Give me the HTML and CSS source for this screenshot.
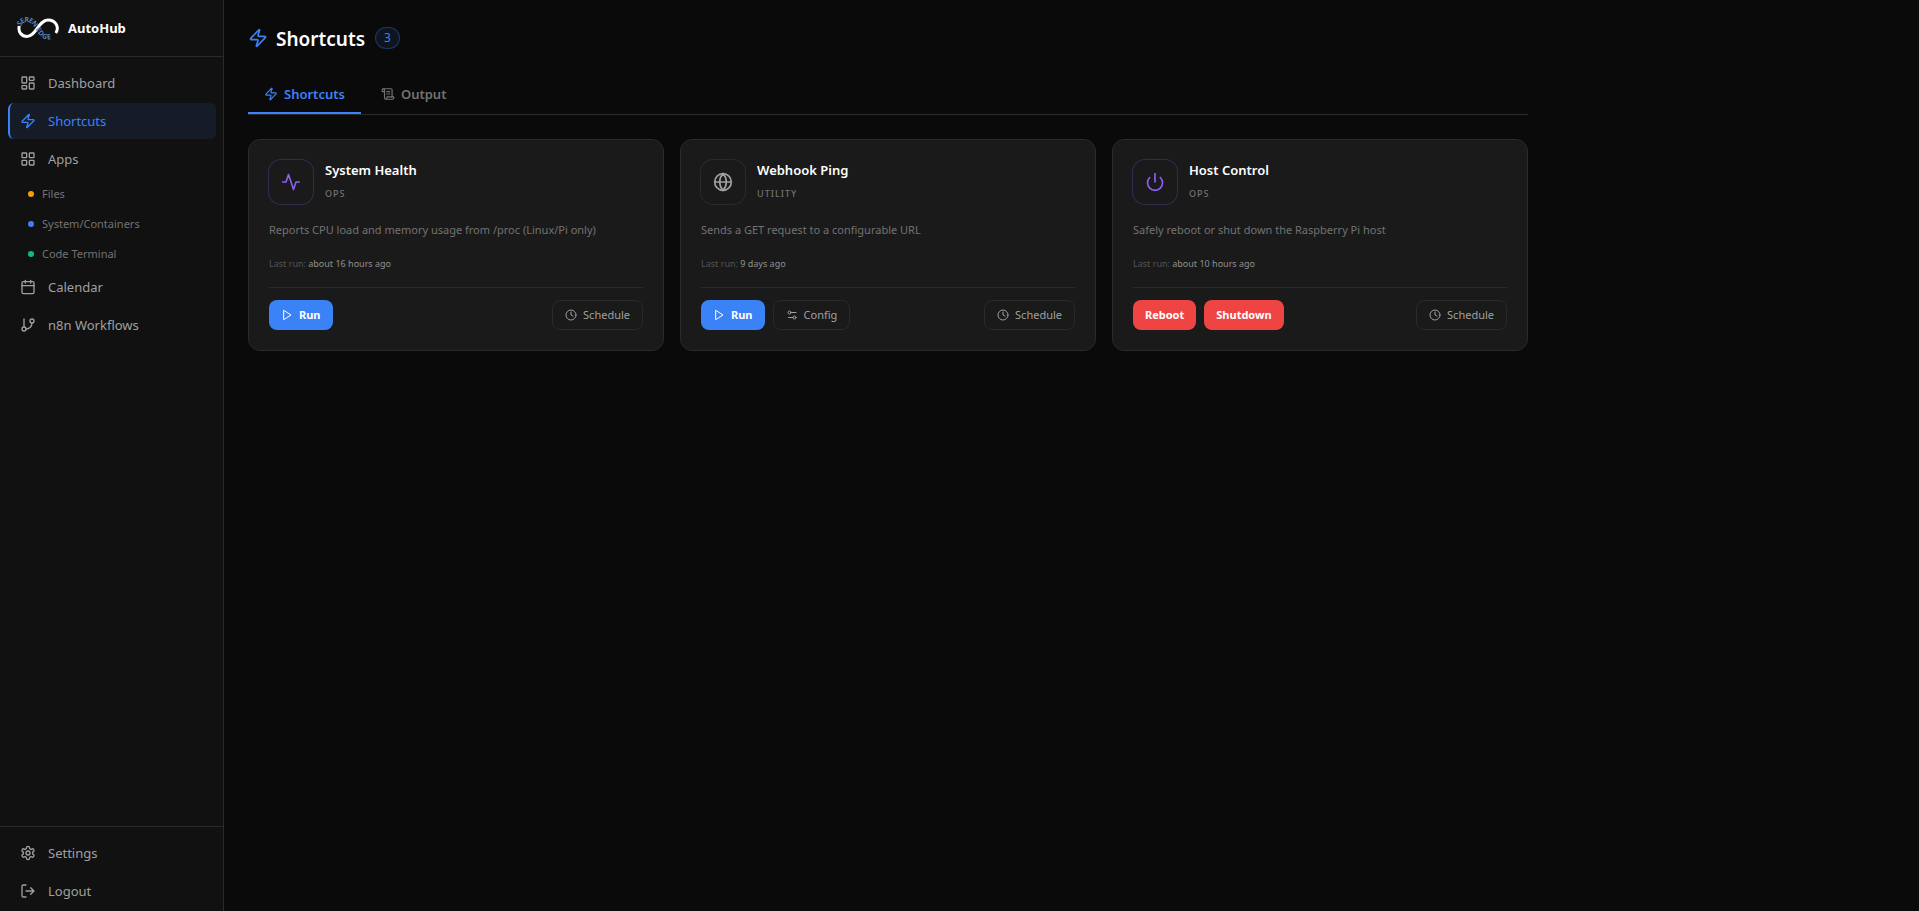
FILE: index.html
```html
<!DOCTYPE html>
<html lang="en">
<head>
  <meta charset="utf-8" />
  <meta name="viewport" content="width=device-width, initial-scale=1" />
  <title>AutoHub – Shortcuts</title>
  <link rel="stylesheet" href="styles.css">
</head>
<body>
  <!-- Shared icon symbols -->
  <svg class="sprite" aria-hidden="true">
    <symbol id="i-zap" viewBox="0 0 24 24"><path d="M4 14a1 1 0 0 1-.78-1.63l9.9-10.2a.5.5 0 0 1 .86.46l-1.92 6.02A1 1 0 0 0 13 10h7a1 1 0 0 1 .78 1.63l-9.9 10.2a.5.5 0 0 1-.86-.46l1.92-6.02A1 1 0 0 0 11 14z"/></symbol>
    <symbol id="i-dashboard" viewBox="0 0 24 24"><rect width="7" height="9" x="3" y="3" rx="1"/><rect width="7" height="5" x="14" y="3" rx="1"/><rect width="7" height="9" x="14" y="12" rx="1"/><rect width="7" height="5" x="3" y="16" rx="1"/></symbol>
    <symbol id="i-grid" viewBox="0 0 24 24"><rect width="7" height="7" x="3" y="3" rx="1"/><rect width="7" height="7" x="14" y="3" rx="1"/><rect width="7" height="7" x="14" y="14" rx="1"/><rect width="7" height="7" x="3" y="14" rx="1"/></symbol>
    <symbol id="i-calendar" viewBox="0 0 24 24"><path d="M8 2v4M16 2v4M3 10h18"/><rect width="18" height="18" x="3" y="4" rx="2"/></symbol>
    <symbol id="i-branch" viewBox="0 0 24 24"><path d="M6 3v12M18 9a9 9 0 0 1-9 9"/><circle cx="18" cy="6" r="3"/><circle cx="6" cy="18" r="3"/></symbol>
    <symbol id="i-settings" viewBox="0 0 24 24"><path d="M12.22 2h-.44a2 2 0 0 0-2 2v.18a2 2 0 0 1-1 1.73l-.43.25a2 2 0 0 1-2 0l-.15-.08a2 2 0 0 0-2.73.73l-.22.38a2 2 0 0 0 .73 2.73l.15.1a2 2 0 0 1 1 1.72v.51a2 2 0 0 1-1 1.74l-.15.09a2 2 0 0 0-.73 2.73l.22.38a2 2 0 0 0 2.73.73l.15-.08a2 2 0 0 1 2 0l.43.25a2 2 0 0 1 1 1.73V20a2 2 0 0 0 2 2h.44a2 2 0 0 0 2-2v-.18a2 2 0 0 1 1-1.73l.43-.25a2 2 0 0 1 2 0l.15.08a2 2 0 0 0 2.73-.73l.22-.39a2 2 0 0 0-.73-2.73l-.15-.08a2 2 0 0 1-1-1.74v-.5a2 2 0 0 1 1-1.74l.15-.09a2 2 0 0 0 .73-2.73l-.22-.38a2 2 0 0 0-2.73-.73l-.15.08a2 2 0 0 1-2 0l-.43-.25a2 2 0 0 1-1-1.73V4a2 2 0 0 0-2-2z"/><circle cx="12" cy="12" r="3"/></symbol>
    <symbol id="i-logout" viewBox="0 0 24 24"><path d="M9 21H5a2 2 0 0 1-2-2V5a2 2 0 0 1 2-2h4M16 17l5-5-5-5M21 12H9"/></symbol>
    <symbol id="i-scroll" viewBox="0 0 24 24"><path d="M15 12h-5M15 8h-5M19 17V5a2 2 0 0 0-2-2H4"/><path d="M8 21h12a2 2 0 0 0 2-2v-1a1 1 0 0 0-1-1H11a1 1 0 0 0-1 1v1a2 2 0 1 1-4 0V5a2 2 0 1 0-4 0v2a1 1 0 0 0 1 1h3"/></symbol>
    <symbol id="i-activity" viewBox="0 0 24 24"><path d="M22 12h-4l-3 9L9 3l-3 9H2"/></symbol>
    <symbol id="i-globe" viewBox="0 0 24 24"><circle cx="12" cy="12" r="10"/><path d="M12 2a14.5 14.5 0 0 0 0 20 14.5 14.5 0 0 0 0-20M2 12h20"/></symbol>
    <symbol id="i-power" viewBox="0 0 24 24"><path d="M12 2v10M18.4 6.6a9 9 0 1 1-12.77.04"/></symbol>
    <symbol id="i-play" viewBox="0 0 24 24"><path d="m6 3 14 9-14 9z"/></symbol>
    <symbol id="i-clock" viewBox="0 0 24 24"><circle cx="12" cy="12" r="10"/><path d="M12 6v6l4 2"/></symbol>
    <symbol id="i-sliders" viewBox="0 0 24 24"><path d="M20 7h-9M14 17H5"/><circle cx="17" cy="17" r="3"/><circle cx="7" cy="7" r="3"/></symbol>
  </svg>

  <div class="app">
    <aside class="sidebar">
      <div class="brand">
        <svg class="logo" viewBox="0 0 44 24" aria-hidden="true">
          <path class="logo-loop" d="M3.200 10C2 16 5.500 20.500 11 20.500C20 20.500 22.500 4 32 4C40 4 43.500 11.500 39.800 17"/>
          <path id="logo-line" class="logo-guide" d="M3 9.500C6 3 13 2.500 17.500 7C21.500 11 23 17.500 28.500 20.500C33 22.500 38 21 43 14"/>
          <text class="logo-text"><textPath href="#logo-line">SEREN EDGE</textPath></text>
        </svg>
        <span class="brand-name">AutoHub</span>
      </div>

      <nav class="nav">
        <a class="nav-item" href="#"><svg class="icon"><use href="#i-dashboard"/></svg>Dashboard</a>
        <a class="nav-item active" href="#"><svg class="icon"><use href="#i-zap"/></svg>Shortcuts</a>
        <a class="nav-item" href="#"><svg class="icon"><use href="#i-grid"/></svg>Apps</a>
        <a class="nav-sub" href="#"><span class="dot amber"></span>Files</a>
        <a class="nav-sub" href="#"><span class="dot blue"></span>System/Containers</a>
        <a class="nav-sub" href="#"><span class="dot green"></span>Code Terminal</a>
        <a class="nav-item" href="#"><svg class="icon"><use href="#i-calendar"/></svg>Calendar</a>
        <a class="nav-item" href="#"><svg class="icon"><use href="#i-branch"/></svg>n8n Workflows</a>
      </nav>

      <div class="nav-bottom">
        <a class="nav-item" href="#"><svg class="icon"><use href="#i-settings"/></svg>Settings</a>
        <button class="nav-item" type="button"><svg class="icon"><use href="#i-logout"/></svg>Logout</button>
      </div>
    </aside>

    <main class="main">
      <div class="content">
        <header class="page-head">
          <svg class="icon icon-lg"><use href="#i-zap"/></svg>
          <h1>Shortcuts</h1>
          <span class="count">3</span>
        </header>

        <div class="tabs" role="tablist">
          <button class="tab active" type="button" role="tab" aria-selected="true"><svg class="icon icon-sm"><use href="#i-zap"/></svg>Shortcuts</button>
          <button class="tab" type="button" role="tab" aria-selected="false"><svg class="icon icon-sm"><use href="#i-scroll"/></svg>Output</button>
        </div>

        <section class="cards">
          <article class="card">
            <div class="card-head">
              <div class="badge ops"><svg class="icon icon-lg"><use href="#i-activity"/></svg></div>
              <div>
                <h2>System Health</h2>
                <div class="category">OPS</div>
              </div>
            </div>
            <p class="desc">Reports CPU load and memory usage from /proc (Linux/Pi only)</p>
            <p class="last-run">Last run: <span>about 16 hours ago</span></p>
            <div class="actions">
              <button class="btn primary" type="button"><svg class="icon icon-xs"><use href="#i-play"/></svg>Run</button>
              <button class="btn ghost push" type="button"><svg class="icon icon-xs"><use href="#i-clock"/></svg>Schedule</button>
            </div>
          </article>

          <article class="card">
            <div class="card-head">
              <div class="badge"><svg class="icon icon-lg"><use href="#i-globe"/></svg></div>
              <div>
                <h2>Webhook Ping</h2>
                <div class="category">UTILITY</div>
              </div>
            </div>
            <p class="desc">Sends a GET request to a configurable URL</p>
            <p class="last-run">Last run: <span>9 days ago</span></p>
            <div class="actions">
              <button class="btn primary" type="button"><svg class="icon icon-xs"><use href="#i-play"/></svg>Run</button>
              <button class="btn ghost" type="button"><svg class="icon icon-xs"><use href="#i-sliders"/></svg>Config</button>
              <button class="btn ghost push" type="button"><svg class="icon icon-xs"><use href="#i-clock"/></svg>Schedule</button>
            </div>
          </article>

          <article class="card">
            <div class="card-head">
              <div class="badge ops"><svg class="icon icon-lg"><use href="#i-power"/></svg></div>
              <div>
                <h2>Host Control</h2>
                <div class="category">OPS</div>
              </div>
            </div>
            <p class="desc">Safely reboot or shut down the Raspberry Pi host</p>
            <p class="last-run">Last run: <span>about 10 hours ago</span></p>
            <div class="actions">
              <button class="btn danger" type="button">Reboot</button>
              <button class="btn danger" type="button">Shutdown</button>
              <button class="btn ghost push" type="button"><svg class="icon icon-xs"><use href="#i-clock"/></svg>Schedule</button>
            </div>
          </article>
        </section>
      </div>
    </main>
  </div>
</body>
</html>
```

FILE: styles.css
```css
:root {
  --bg: #0a0a0a;
  --panel: #111111;
  --card: #1a1a1a;
  --line: #2a2a2a;
  --text: #ffffff;
  --text-2: #a0a0a0;
  --text-3: #737373;
  --text-4: #555555;
  --blue: #3b82f6;
  --purple: #8b5cf6;
  --red: #ef4444;
}
* { box-sizing: border-box; }
body { margin: 0; background: var(--bg); color: var(--text); font-family: "Noto Sans", "Open Sans", sans-serif; font-size: 13px; line-height: 20px; }
a { color: inherit; text-decoration: none; }
button { font: inherit; color: inherit; background: none; border: 0; cursor: pointer; }
h1, h2, p { margin: 0; }
.sprite { display: none; }
.icon { width: 16px; height: 16px; flex: none; fill: none; stroke: currentColor; stroke-width: 2; stroke-linecap: round; stroke-linejoin: round; }
.icon-xs { width: 12px; height: 12px; }
.icon-sm { width: 14px; height: 14px; }
.icon-lg { width: 20px; height: 20px; }

.app { display: flex; min-height: 100vh; }

/* Sidebar */
.sidebar { width: 224px; flex: none; display: flex; flex-direction: column; background: var(--panel); border-right: 1px solid var(--line); }
.brand { display: flex; align-items: center; gap: 8px; height: 57px; padding: 0 16px; border-bottom: 1px solid var(--line); }
.logo { width: 44px; height: 24px; }
.logo-loop { fill: none; stroke: #fff; stroke-width: 3; }
.logo-guide { fill: none; }
.logo-text { font-size: 7px; font-weight: 600; fill: #5b8fd0; dominant-baseline: middle; }
.brand-name { font-size: 13px; font-weight: 700; }
.nav { flex: 1; padding: 8px 7px 0 8px; }
.nav-bottom { padding: 8px 7px 0 8px; border-top: 1px solid var(--line); }
.nav-item { display: flex; align-items: center; gap: 12px; width: 100%; height: 36px; margin-bottom: 2px; padding: 0 10px; border-left: 2px solid transparent; border-radius: 6px; color: var(--text-2); font-size: 13px; }
.nav-item.active { color: var(--blue); background: rgba(59,130,246,.1); border-left-color: var(--blue); }
.nav-sub { display: flex; align-items: center; gap: 8px; height: 30px; padding-left: 20px; color: var(--text-3); font-size: 11px; }
.dot { width: 6px; height: 6px; border-radius: 50%; }
.dot.amber { background: #f59e0b; }
.dot.blue { background: var(--blue); }
.dot.green { background: #10b981; }

/* Page */
.main { flex: 1; min-width: 0; padding: 24px; }
.content { max-width: 1280px; }
.page-head { display: flex; align-items: center; gap: 8px; height: 28px; color: var(--blue); }
.page-head h1 { padding-top: 2px; color: var(--text); font-size: 19px; line-height: 28px; font-weight: 600; }
.count { margin-left: 2px; padding: 0 8px; border: 1px solid rgba(59,130,246,.3); border-radius: 999px; background: rgba(59,130,246,.1); font-size: 12px; }
.tabs { display: flex; gap: 4px; margin: 22px 0 24px; border-bottom: 1px solid var(--line); }
.tab { display: flex; align-items: center; gap: 6px; height: 40px; padding: 2px 16px 0; border-bottom: 2px solid transparent; color: var(--text-3); font-weight: 600; }
.tab.active { color: var(--blue); border-bottom-color: var(--blue); }

/* Shortcut cards */
.cards { display: grid; grid-template-columns: repeat(3, 1fr); gap: 16px; }
.card { padding: 20px; border: 1px solid var(--line); border-radius: 12px; background: var(--card); }
.card-head { display: flex; gap: 12px; }
.badge { display: flex; align-items: center; justify-content: center; width: 44px; height: 44px; border-radius: 12px; color: var(--text-2); box-shadow: 0 0 0 1px var(--line); }
.badge.ops { color: var(--purple); box-shadow: 0 0 0 1px rgba(139,92,246,.25); }
.card h2 { font-size: 13px; line-height: 20px; font-weight: 600; }
.category { margin-top: 6px; color: var(--text-3); font-size: 9px; font-weight: 500; line-height: 16px; letter-spacing: 1px; }
.desc { margin-top: 16px; color: var(--text-3); font-size: 11px; }
.last-run { margin-top: 16px; color: var(--text-4); font-size: 9px; line-height: 16px; }
.last-run span { color: #909090; }
.actions { display: flex; gap: 8px; margin-top: 15px; padding-top: 12px; border-top: 1px solid var(--line); }
.btn { display: flex; align-items: center; gap: 6px; height: 30px; padding: 0 12px; border-radius: 8px; font-size: 11px; font-weight: 700; }
.btn.primary { background: var(--blue); }
.btn.danger { background: var(--red); }
.btn.ghost { border: 1px solid var(--line); color: var(--text-2); font-size: 11px; font-weight: 400; }
.btn.push { margin-left: auto; }
```
